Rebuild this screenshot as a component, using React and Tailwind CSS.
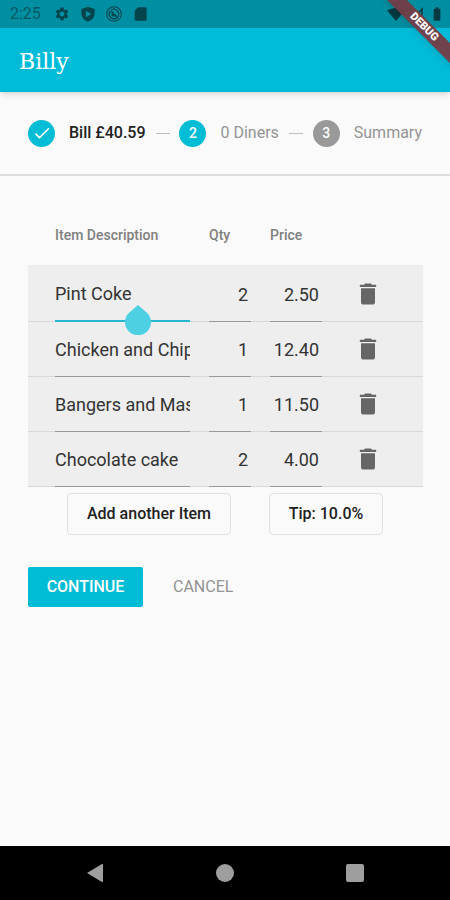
import { useState } from "react";
import { MdCheck, MdDelete, MdSettings, MdBatteryFull } from "react-icons/md";

const initialItems = [
  { id: 1, name: "Pint Coke", qty: "2", price: "2.50" },
  { id: 2, name: "Chicken and Chips", qty: "1", price: "12.40" },
  { id: 3, name: "Bangers and Mash", qty: "1", price: "11.50" },
  { id: 4, name: "Chocolate cake", qty: "2", price: "4.00" },
];

function StatusBar() {
  return (
    <div className="flex h-7 items-center justify-between bg-[#008fa2] pl-[10px] pr-[5px] text-[#04444d]">
      <div className="flex items-center gap-[10px]">
        <span className="w-[34px] text-base text-[#055965]">2:25</span>
        <MdSettings className="size-4" />
        {/* play protect shield */}
        <svg viewBox="0 0 24 24" className="size-4" fill="currentColor">
          <path
            fillRule="evenodd"
            d="M12 1 2 4.500V11c0 6 4.300 10.500 10 12.500C17.700 21.500 22 17 22 11V4.500L12 1ZM9 7 17 12l-8 5v-10Z"
          />
        </svg>
        <svg viewBox="0 0 24 24" className="size-4" fill="none" stroke="currentColor">
          <circle cx="12" cy="12" r="11" strokeWidth="1.600" />
          <path d="M7 7 18 18" strokeWidth="2.200" />
          <path d="M8 6a7.300 7.300 0 0 1 10 10M6 8a7.300 7.300 0 0 0 10 10" strokeWidth="1.800" />
          <path d="M9 11v4h4Z" fill="currentColor" />
        </svg>
        <svg viewBox="0 0 24 24" className="size-4" fill="currentColor">
          <path d="M9 2h11a2 2 0 0 1 2 2v16a2 2 0 0 1-2 2H6a2 2 0 0 1-2-2V7Z" />
        </svg>
      </div>
      <div className="flex items-center gap-[5px] text-[#053a42]">
        <svg viewBox="0 0 18 14" className="h-[14px] w-[18px]" fill="currentColor">
          <path d="M9 14 0 3.500C5 0 13 0 18 3.500Z" />
        </svg>
        <svg viewBox="0 0 14 14" className="size-[14px]" fill="none" stroke="currentColor">
          <path d="M12 2v11H2Z" strokeWidth="1.500" />
        </svg>
        <MdBatteryFull className="size-4" />
      </div>
    </div>
  );
}

function DebugBanner() {
  return (
    <div className="pointer-events-none absolute right-0 top-0 size-20 overflow-hidden">
      <div className="absolute -right-6 top-5 flex h-[14px] w-[100px] rotate-45 items-center justify-center bg-[#743c44]/95 text-[11px] font-black text-white shadow-md">
        DEBUG
      </div>
    </div>
  );
}

function Step({ badge, label, active, done }) {
  return (
    <li className="flex items-center gap-[14px]">
      <span
        className={`flex size-[27px] items-center justify-center rounded-full text-sm font-medium text-white ${
          active ? "bg-[#00bcd4]" : "bg-[#999999]"
        }`}
      >
        {badge}
      </span>
      <span className={done ? "font-medium text-[#212121]" : "text-[#949494]"}>
        {label}
      </span>
    </li>
  );
}

function StepLine() {
  return <li aria-hidden="true" className="h-px w-[14px] bg-[#bdbdbd]" />;
}

function ItemRow({ item, first, onChange, onDelete }) {
  const field =
    "relative -mb-px block h-[55px] w-full border-b bg-transparent text-lg text-[#333333] outline-none";
  const line = "border-[#999999]";
  const cell = `border-b border-[#d8d8d8] p-0 ${first ? "pt-[2px]" : ""}`;

  return (
    <tr className="bg-[#eeeeee]">
      <td className={`${cell} pl-[27px]`}>
        <div className="relative">
          <input
            aria-label="Item Description"
            className={`${field} ${first ? "border-b-2 border-[#26b8d0]" : line}`}
            value={item.name}
            onChange={(e) => onChange(item.id, "name", e.target.value)}
          />
          {/* text cursor handle */}
          {first && (
            <svg
              viewBox="0 0 26 30"
              className="absolute left-[70px] top-[38px] z-10 h-[30px] w-[26px]"
              fill="#4dd0e1"
            >
              <path d="M13 0 22.200 8A13 13 0 1 1 3.800 8Z" />
            </svg>
          )}
        </div>
      </td>
      <td className={`${cell} pl-[19px]`}>
        <input
          aria-label="Qty"
          className={`${field} ${line} pr-[3px] text-right`}
          value={item.qty}
          onChange={(e) => onChange(item.id, "qty", e.target.value)}
        />
      </td>
      <td className={`${cell} pl-[19px]`}>
        <input
          aria-label="Price"
          className={`${field} ${line} pr-[3px] text-right`}
          value={item.price}
          onChange={(e) => onChange(item.id, "price", e.target.value)}
        />
      </td>
      <td className={`${cell} pl-8`}>
        <button
          aria-label={`Delete ${item.name}`}
          className="block text-[#666666]"
          onClick={() => onDelete(item.id)}
        >
          <MdDelete className="size-7" />
        </button>
      </td>
    </tr>
  );
}

export default function App() {
  const [items, setItems] = useState(initialItems);

  const changeItem = (id, key, value) => {
    setItems((prev) =>
      prev.map((item) => (item.id === id ? { ...item, [key]: value } : item))
    );
  };

  const deleteItem = (id) => {
    setItems((prev) => prev.filter((item) => item.id !== id));
  };

  return (
    <div className="relative flex min-h-screen flex-col bg-[#fafafa] font-['Roboto',sans-serif]">
      <StatusBar />
      <header className="relative flex h-16 items-center bg-[#00bcd9] px-[19px] pt-[2px] shadow-md">
        <h1 className="font-['DejaVu_Serif',serif] text-[22px] text-white">Billy</h1>
      </header>
      <DebugBanner />

      <ol className="flex h-[84px] items-center justify-between border-b-2 border-[#dcdcdc] px-7 text-base">
        <Step badge={<MdCheck className="size-5" />} label="Bill £40.59" active done />
        <StepLine />
        <Step badge="2" label="0 Diners" active />
        <StepLine />
        <Step badge="3" label="Summary" />
      </ol>

      <main className="flex-1 pl-7 pr-[27px] pt-7">
        <table className="w-full table-fixed border-separate border-spacing-0">
          <colgroup>
            <col className="w-[162px]" />
            <col className="w-[61px]" />
            <col className="w-[71px]" />
            <col />
          </colgroup>
          <thead>
            <tr className="h-[61px] text-left text-sm text-[#808080]">
              <th className="p-0 pl-[27px] font-medium">Item Description</th>
              <th className="p-0 pl-[19px] font-medium">Qty</th>
              <th className="p-0 pl-[19px] font-medium">Price</th>
              <th className="p-0" />
            </tr>
          </thead>
          <tbody>
            {items.map((item, i) => (
              <ItemRow
                key={item.id}
                item={item}
                first={i === 0}
                onChange={changeItem}
                onDelete={deleteItem}
              />
            ))}
          </tbody>
        </table>

        <div className="flex gap-[38px] pl-[39px] pt-[6px] text-base font-medium text-[#212121]">
          <button className="h-[42px] w-[164px] rounded-sm border border-[#e0e0e0]">
            Add another Item
          </button>
          <button className="h-[42px] w-[114px] rounded-sm border border-[#e0e0e0]">
            Tip: 10.0%
          </button>
        </div>

        <div className="flex gap-[10px] pt-8 text-base">
          <button className="h-10 w-[115px] rounded-xs bg-[#00bcd4] font-medium text-white">
            CONTINUE
          </button>
          <button className="h-10 px-5 text-[#949494]">CANCEL</button>
        </div>
      </main>

      <nav className="grid h-[54px] grid-cols-3 place-items-center bg-black px-[30px] text-[#9e9e9e]">
        <button aria-label="Back">
          <svg viewBox="0 0 20 20" className="size-5" fill="currentColor">
            <path d="M2 10 17 1Q18 .5 18 2v16q0 1.500-1 1Z" />
          </svg>
        </button>
        <button aria-label="Home" className="size-[18px] rounded-full bg-[#9e9e9e]" />
        <button aria-label="Recent apps" className="size-[18px] rounded-xs bg-[#9e9e9e]" />
      </nav>
    </div>
  );
}
